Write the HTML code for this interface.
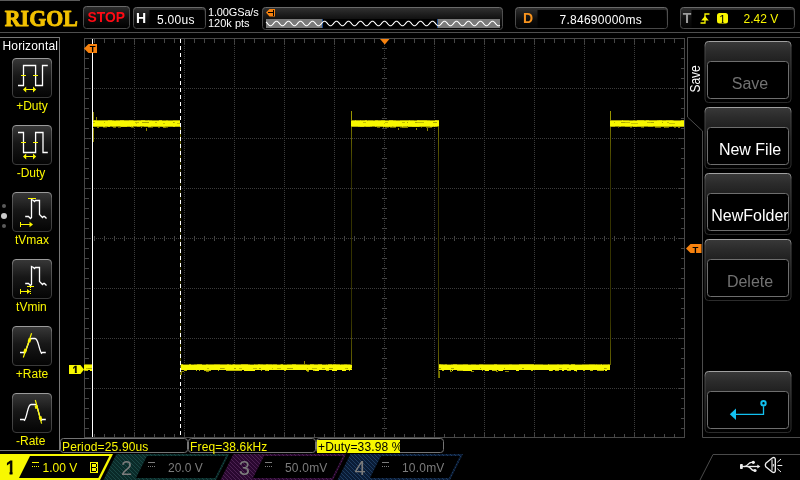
<!DOCTYPE html>
<html><head><meta charset="utf-8"><title>RIGOL Oscilloscope</title>
<style>
html,body{margin:0;padding:0;background:#000;}
body{width:800px;height:480px;overflow:hidden;}
svg{display:block;will-change:transform;font-family:"Liberation Sans",Arial,sans-serif;}
</style></head><body>
<svg width="800" height="480" viewBox="0 0 800 480" shape-rendering="crispEdges">
<defs>
<linearGradient id="gbtn" x1="0" y1="0" x2="0" y2="1"><stop offset="0" stop-color="#2c2c2c"/><stop offset=".6" stop-color="#0c0c0c"/><stop offset="1" stop-color="#000"/></linearGradient>
<linearGradient id="glab" x1="0" y1="0" x2="0" y2="1"><stop offset="0" stop-color="#323232"/><stop offset=".25" stop-color="#212121"/><stop offset=".6" stop-color="#0c0c0c"/><stop offset="1" stop-color="#030303"/></linearGradient>
<linearGradient id="gbord" x1="0" y1="0" x2="0" y2="1"><stop offset="0" stop-color="#6a6a6a"/><stop offset=".2" stop-color="#505050"/><stop offset="1" stop-color="#484848"/></linearGradient>
<linearGradient id="gedge" gradientUnits="userSpaceOnUse" x1="0" y1="112" x2="0" y2="378"><stop offset="0" stop-color="#8e8a00"/><stop offset=".06" stop-color="#747000"/><stop offset=".22" stop-color="#343200"/><stop offset=".78" stop-color="#343200"/><stop offset=".94" stop-color="#646000"/><stop offset="1" stop-color="#6c6800"/></linearGradient>
<linearGradient id="gkey" x1="0" y1="0" x2="0" y2="1"><stop offset="0" stop-color="#383838"/><stop offset=".45" stop-color="#171717"/><stop offset="1" stop-color="#040404"/></linearGradient>
<linearGradient id="gkeyb" x1="0" y1="0" x2="0" y2="1"><stop offset="0" stop-color="#9a9a9a"/><stop offset=".15" stop-color="#5a5a5a"/><stop offset="1" stop-color="#3a3a3a"/></linearGradient>
<linearGradient id="gkey2" x1="0" y1="0" x2="0" y2="1"><stop offset="0" stop-color="#393939"/><stop offset=".15" stop-color="#2c2c2c"/><stop offset=".33" stop-color="#202020"/><stop offset=".5" stop-color="#101010"/><stop offset="1" stop-color="#000"/></linearGradient>
<linearGradient id="gkeyb2" x1="0" y1="0" x2="0" y2="1"><stop offset="0" stop-color="#a0a0a0"/><stop offset=".1" stop-color="#4a4a4a"/><stop offset="1" stop-color="#2c2c2c"/></linearGradient>
<pattern id="tealh" width="4" height="4" patternUnits="userSpaceOnUse"><rect width="4" height="4" fill="#0a2b29"/><path d="M0 0h1v1h-1zM1 1h1v1h-1zM2 2h1v1h-1zM3 3h1v1h-1z" fill="#1a4644"/></pattern>
<pattern id="purph" width="4" height="4" patternUnits="userSpaceOnUse"><rect width="4" height="4" fill="#2a0830"/><path d="M0 0h1v1h-1zM1 1h1v1h-1zM2 2h1v1h-1zM3 3h1v1h-1z" fill="#4c2252"/></pattern>
<pattern id="blueh" width="4" height="4" patternUnits="userSpaceOnUse"><rect width="4" height="4" fill="#0a1c36"/><path d="M0 0h1v1h-1zM1 1h1v1h-1zM2 2h1v1h-1zM3 3h1v1h-1z" fill="#1e3c60"/></pattern>
</defs>
<rect width="800" height="480" fill="#000"/>
<rect x="0" y="0" width="80" height="1" fill="#5a5a5a" />
<rect x="0" y="32" width="800" height="1" fill="#4e4e4e" />
<text x="4.8" y="25.8" font-size="24" fill="#f2c100" font-weight="bold" font-family="Liberation Serif, Times New Roman, serif" textLength="73" lengthAdjust="spacingAndGlyphs" stroke="#f2c100" stroke-width="0.9" stroke-linejoin="round">RIGOL</text>
<rect x="83.5" y="6.5" width="46" height="22" rx="3" fill="url(#gbtn)" stroke="url(#gbord)" shape-rendering="geometricPrecision"/>
<text x="87.5" y="22" font-size="14" fill="#ff0a14" font-weight="bold" textLength="37.5" lengthAdjust="spacingAndGlyphs">STOP</text>
<rect x="133.5" y="7.5" width="72" height="21" rx="3" fill="url(#glab)" stroke="url(#gbord)" shape-rendering="geometricPrecision"/>
<path d="M149.500 10h53.500a1.500 1.500 0 0 1 1.500 1.500v15a1.500 1.500 0 0 1-1.500 1.500h-53.500z" fill="#000" shape-rendering="geometricPrecision"/>
<text x="136" y="23" font-size="14" fill="#fff" font-weight="bold" >H</text>
<text x="157" y="24" font-size="12" fill="#fff" letter-spacing="0.3">5.00us</text>
<text x="208" y="16" font-size="11" fill="#fff" letter-spacing="-0.15">1.00GSa/s</text>
<text x="208" y="26.5" font-size="11" fill="#fff" >120k pts</text>
<rect x="262.5" y="7.5" width="240" height="22" rx="3" fill="url(#glab)" stroke="url(#gbord)" shape-rendering="geometricPrecision"/>
<rect x="266" y="19" width="234" height="9" fill="#000" />
<rect x="266" y="19" width="56" height="9" fill="#7a7a7a" />
<rect x="438" y="19" width="62" height="9" fill="#7a7a7a" />
<rect x="322" y="19" width="1" height="9" fill="#1c4a8c" />
<rect x="437" y="19" width="1" height="9" fill="#1c4a8c" />
<polyline points="266.0,21.87 267.0,22.90 268.0,24.10 269.0,25.13 270.0,25.72 271.0,25.72 272.0,25.13 273.0,24.10 274.0,22.90 275.0,21.87 276.0,21.28 277.0,21.28 278.0,21.87 279.0,22.90 280.0,24.10 281.0,25.13 282.0,25.72 283.0,25.72 284.0,25.13 285.0,24.10 286.0,22.90 287.0,21.87 288.0,21.28 289.0,21.28 290.0,21.87 291.0,22.90 292.0,24.10 293.0,25.13 294.0,25.72 295.0,25.72 296.0,25.13 297.0,24.10 298.0,22.90 299.0,21.87 300.0,21.28 301.0,21.28 302.0,21.87 303.0,22.90 304.0,24.10 305.0,25.13 306.0,25.72 307.0,25.72 308.0,25.13 309.0,24.10 310.0,22.90 311.0,21.87 312.0,21.28 313.0,21.28 314.0,21.87 315.0,22.90 316.0,24.10 317.0,25.13 318.0,25.72 319.0,25.72 320.0,25.13 321.0,24.10 322.0,22.90 323.0,21.87 324.0,21.28 325.0,21.28 326.0,21.87 327.0,22.90 328.0,24.10 329.0,25.13 330.0,25.72 331.0,25.72 332.0,25.13 333.0,24.10 334.0,22.90 335.0,21.87 336.0,21.28 337.0,21.28 338.0,21.87 339.0,22.90 340.0,24.10 341.0,25.13 342.0,25.72 343.0,25.72 344.0,25.13 345.0,24.10 346.0,22.90 347.0,21.87 348.0,21.28 349.0,21.28 350.0,21.87 351.0,22.90 352.0,24.10 353.0,25.13 354.0,25.72 355.0,25.72 356.0,25.13 357.0,24.10 358.0,22.90 359.0,21.87 360.0,21.28 361.0,21.28 362.0,21.87 363.0,22.90 364.0,24.10 365.0,25.13 366.0,25.72 367.0,25.72 368.0,25.13 369.0,24.10 370.0,22.90 371.0,21.87 372.0,21.28 373.0,21.28 374.0,21.87 375.0,22.90 376.0,24.10 377.0,25.13 378.0,25.72 379.0,25.72 380.0,25.13 381.0,24.10 382.0,22.90 383.0,21.87 384.0,21.28 385.0,21.28 386.0,21.87 387.0,22.90 388.0,24.10 389.0,25.13 390.0,25.72 391.0,25.72 392.0,25.13 393.0,24.10 394.0,22.90 395.0,21.87 396.0,21.28 397.0,21.28 398.0,21.87 399.0,22.90 400.0,24.10 401.0,25.13 402.0,25.72 403.0,25.72 404.0,25.13 405.0,24.10 406.0,22.90 407.0,21.87 408.0,21.28 409.0,21.28 410.0,21.87 411.0,22.90 412.0,24.10 413.0,25.13 414.0,25.72 415.0,25.72 416.0,25.13 417.0,24.10 418.0,22.90 419.0,21.87 420.0,21.28 421.0,21.28 422.0,21.87 423.0,22.90 424.0,24.10 425.0,25.13 426.0,25.72 427.0,25.72 428.0,25.13 429.0,24.10 430.0,22.90 431.0,21.87 432.0,21.28 433.0,21.28 434.0,21.87 435.0,22.90 436.0,24.10 437.0,25.13 438.0,25.72 439.0,25.72 440.0,25.13 441.0,24.10 442.0,22.90 443.0,21.87 444.0,21.28 445.0,21.28 446.0,21.87 447.0,22.90 448.0,24.10 449.0,25.13 450.0,25.72 451.0,25.72 452.0,25.13 453.0,24.10 454.0,22.90 455.0,21.87 456.0,21.28 457.0,21.28 458.0,21.87 459.0,22.90 460.0,24.10 461.0,25.13 462.0,25.72 463.0,25.72 464.0,25.13 465.0,24.10 466.0,22.90 467.0,21.87 468.0,21.28 469.0,21.28 470.0,21.87 471.0,22.90 472.0,24.10 473.0,25.13 474.0,25.72 475.0,25.72 476.0,25.13 477.0,24.10 478.0,22.90 479.0,21.87 480.0,21.28 481.0,21.28 482.0,21.87 483.0,22.90 484.0,24.10 485.0,25.13 486.0,25.72 487.0,25.72 488.0,25.13 489.0,24.10 490.0,22.90 491.0,21.87 492.0,21.28 493.0,21.28 494.0,21.87 495.0,22.90 496.0,24.10 497.0,25.13 498.0,25.72 499.0,25.72 500.0,25.13" fill="none" stroke="#fff" stroke-width="1.1" shape-rendering="geometricPrecision"/>
<path d="M266 12.500l3.500-3.500h5.500v7.500h-5.500z" fill="#f7820e" shape-rendering="geometricPrecision"/>
<rect x="268" y="12" width="5" height="1" fill="#000" />
<rect x="273" y="10" width="1" height="6" fill="#000" />
<rect x="515.5" y="7.5" width="152" height="21" rx="3" fill="url(#glab)" stroke="url(#gbord)" shape-rendering="geometricPrecision"/>
<path d="M537.500 10h127.500a1.500 1.500 0 0 1 1.500 1.500v15a1.500 1.500 0 0 1-1.500 1.500h-127.500z" fill="#000" shape-rendering="geometricPrecision"/>
<text x="523" y="23" font-size="14" fill="#f7931e" font-weight="bold" >D</text>
<text x="559.5" y="24" font-size="12" fill="#fff" letter-spacing="0.26">7.84690000ms</text>
<rect x="680.5" y="7.5" width="114" height="21" rx="3" fill="url(#glab)" stroke="url(#gbord)" shape-rendering="geometricPrecision"/>
<path d="M691.500 10h100.500a1.500 1.500 0 0 1 1.500 1.500v15a1.500 1.500 0 0 1-1.500 1.500h-100.500z" fill="#000" shape-rendering="geometricPrecision"/>
<text x="682.7" y="23" font-size="14" fill="#9c9c9c" font-weight="bold" >T</text>
<path d="M700.500 23h4.500v-9h4.500" fill="none" stroke="#faf600" stroke-width="1.3" shape-rendering="geometricPrecision"/>
<path d="M705 16l-3.800 4.500h7.600z" fill="#faf600" shape-rendering="geometricPrecision"/>
<rect x="717" y="13" width="11" height="10.500" rx="2.500" fill="#faf600" shape-rendering="geometricPrecision"/>
<clipPath id="c2"><rect x="715" y="10" width="14" height="11.500"/><rect x="721.800" y="10" width="1.800" height="14"/></clipPath>
<text x="719.2" y="22.5" font-size="11.5" fill="#000" clip-path="url(#c2)">1</text>
<text x="743.5" y="23.2" font-size="12" fill="#faf600" >2.42 V</text>
<path d="M0 37.5h59.5v413h-59.5" fill="none" stroke="#777"/>
<text x="2.5" y="49.7" font-size="12" fill="#fff" letter-spacing="0.15">Horizontal</text>
<rect x="12.5" y="58.5" width="39" height="39" rx="3.500" fill="url(#gkey)" stroke="url(#gkeyb)" shape-rendering="geometricPrecision"/>
<text x="32" y="109.6" font-size="12" fill="#faf600" text-anchor="middle">+Duty</text>
<rect x="12.5" y="125.5" width="39" height="39" rx="3.500" fill="url(#gkey)" stroke="url(#gkeyb)" shape-rendering="geometricPrecision"/>
<text x="31" y="176.6" font-size="12" fill="#faf600" text-anchor="middle">-Duty</text>
<rect x="12.5" y="192.5" width="39" height="39" rx="3.500" fill="url(#gkey)" stroke="url(#gkeyb)" shape-rendering="geometricPrecision"/>
<text x="32" y="243.6" font-size="12" fill="#faf600" text-anchor="middle">tVmax</text>
<rect x="12.5" y="259.5" width="39" height="39" rx="3.500" fill="url(#gkey)" stroke="url(#gkeyb)" shape-rendering="geometricPrecision"/>
<text x="31.4" y="310.6" font-size="12" fill="#faf600" text-anchor="middle">tVmin</text>
<rect x="12.5" y="326.5" width="39" height="39" rx="3.500" fill="url(#gkey)" stroke="url(#gkeyb)" shape-rendering="geometricPrecision"/>
<text x="32" y="377.6" font-size="12" fill="#faf600" text-anchor="middle">+Rate</text>
<rect x="12.5" y="393.5" width="39" height="39" rx="3.500" fill="url(#gkey)" stroke="url(#gkeyb)" shape-rendering="geometricPrecision"/>
<text x="30.7" y="444.6" font-size="12" fill="#faf600" text-anchor="middle">-Rate</text>
<path d="M18 85.5H23.5V65.5H35.6V85.5H42.5V65.5H47.8" fill="none" stroke="#fff" stroke-width="1.3" stroke-linejoin="miter" shape-rendering="geometricPrecision"/>
<rect x="21" y="75" width="5" height="1" fill="#faf600" />
<rect x="33" y="75" width="5" height="1" fill="#faf600" />
<path d="M24 89.5h11" stroke="#faf600" stroke-width="1.2"/><path d="M23 89.5l3.200-3v6zM36.200 89.5l-3.200-3v6z" fill="#faf600" shape-rendering="geometricPrecision"/>
<path d="M18 132.5H23.5V152.5H35.6V132.5H43V152.5H47.8" fill="none" stroke="#fff" stroke-width="1.3" stroke-linejoin="miter" shape-rendering="geometricPrecision"/>
<rect x="21" y="142" width="5" height="1" fill="#faf600" />
<rect x="33" y="142" width="5" height="1" fill="#faf600" />
<path d="M24 156.5h11" stroke="#faf600" stroke-width="1.2"/><path d="M23 156.5l3.200-3v6zM36.200 156.5l-3.200-3v6z" fill="#faf600" shape-rendering="geometricPrecision"/>
<path d="M25.2 216.5H28.5L30.5 218.5L31.500 217.5V199.5L33.500 200.5L34.500 201.5L35.500 200.5H39.500V214.5L41.500 216.5L42.500 217.5L43.500 216.5H44.500L46.500 218.5" fill="none" stroke="#fff" stroke-width="1.3" stroke-linejoin="miter" shape-rendering="geometricPrecision"/>
<rect x="28" y="198" width="8" height="1" fill="#faf600" />
<path d="M20.5 222v5M20.5 224.5h10" stroke="#faf600" stroke-width="1.2" fill="none"/><path d="M33 224.5l-3.500-2.800v5.600z" fill="#faf600" shape-rendering="geometricPrecision"/>
<path d="M25.2 283.5H28.5L30.5 285.5L31.500 284.5V266.5L33.500 267.5L34.500 268.5L35.500 267.5H39.500V281.5L41.500 283.5L42.500 284.5L43.500 283.5H44.500L46.500 285.5" fill="none" stroke="#fff" stroke-width="1.3" stroke-linejoin="miter" shape-rendering="geometricPrecision"/>
<rect x="27" y="286" width="7" height="1" fill="#faf600" />
<path d="M20.5 289v5M20.5 291.5h8" stroke="#faf600" stroke-width="1.2" fill="none"/><path d="M30.300 291.5l-3.300-2.600v5.200z" fill="#faf600" shape-rendering="geometricPrecision"/>
<rect x="30" y="287" width="1" height="1" fill="#faf600" />
<rect x="30" y="289" width="1" height="1" fill="#faf600" />
<rect x="30" y="291" width="1" height="1" fill="#faf600" />
<rect x="30" y="293" width="1" height="1" fill="#faf600" />
<path d="M20 352.5H23.5L24.500 353.3L25.300 352L29.800 339.5Q30.300 338.5 32 338.5H35C38.500 338.5 38.500 349 41.500 353.3L42.500 352.5H45.800" fill="none" stroke="#fff" stroke-width="1.3" stroke-linejoin="miter" shape-rendering="geometricPrecision"/>
<path d="M23.300 357.5L31.600 333.3" stroke="#faf600" stroke-width="1.200" shape-rendering="geometricPrecision"/>
<path d="M24.600 352.5L25.800 349M28.900 342L30.100 338.5" stroke="#faf600" stroke-width="2.800" shape-rendering="geometricPrecision"/>
<path d="M20 419.5H23.5L24.500 420.3C27.500 416 27.500 404.5 31 404.5H35.500Q36.300 404.5 36.800 405.8L40.600 419.5L41.300 420.3L42.500 419.5H45.800" fill="none" stroke="#fff" stroke-width="1.3" stroke-linejoin="miter" shape-rendering="geometricPrecision"/>
<path d="M35.300 400L41.600 423.7" stroke="#faf600" stroke-width="1.200" shape-rendering="geometricPrecision"/>
<path d="M35.900 405.3L36.800 408.7M40 416.3L40.900 419.7" stroke="#faf600" stroke-width="2.800" shape-rendering="geometricPrecision"/>
<circle cx="4" cy="206" r="2" fill="#5a5a5a" shape-rendering="geometricPrecision"/>
<circle cx="4" cy="216" r="3" fill="#c8c8c8" shape-rendering="geometricPrecision"/>
<circle cx="4" cy="226" r="2" fill="#5a5a5a" shape-rendering="geometricPrecision"/>
<rect x="84.5" y="38.5" width="600" height="399" fill="none" stroke="#484848"/>
<path d="M94.5 39v4M94.5 437v-3M104.5 39v4M104.5 437v-3M114.5 39v4M114.5 437v-3M124.5 39v4M124.5 437v-3M134.5 39v6M134.5 437v-5M144.5 39v4M144.5 437v-3M154.5 39v4M154.5 437v-3M164.5 39v4M164.5 437v-3M174.5 39v4M174.5 437v-3M184.5 39v6M184.5 437v-5M194.5 39v4M194.5 437v-3M204.5 39v4M204.5 437v-3M214.5 39v4M214.5 437v-3M224.5 39v4M224.5 437v-3M234.5 39v6M234.5 437v-5M244.5 39v4M244.5 437v-3M254.5 39v4M254.5 437v-3M264.5 39v4M264.5 437v-3M274.5 39v4M274.5 437v-3M284.5 39v6M284.5 437v-5M294.5 39v4M294.5 437v-3M304.5 39v4M304.5 437v-3M314.5 39v4M314.5 437v-3M324.5 39v4M324.5 437v-3M334.5 39v6M334.5 437v-5M344.5 39v4M344.5 437v-3M354.5 39v4M354.5 437v-3M364.5 39v4M364.5 437v-3M374.5 39v4M374.5 437v-3M384.5 39v6M384.5 437v-5M394.5 39v4M394.5 437v-3M404.5 39v4M404.5 437v-3M414.5 39v4M414.5 437v-3M424.5 39v4M424.5 437v-3M434.5 39v6M434.5 437v-5M444.5 39v4M444.5 437v-3M454.5 39v4M454.5 437v-3M464.5 39v4M464.5 437v-3M474.5 39v4M474.5 437v-3M484.5 39v6M484.5 437v-5M494.5 39v4M494.5 437v-3M504.5 39v4M504.5 437v-3M514.5 39v4M514.5 437v-3M524.5 39v4M524.5 437v-3M534.5 39v6M534.5 437v-5M544.5 39v4M544.5 437v-3M554.5 39v4M554.5 437v-3M564.5 39v4M564.5 437v-3M574.5 39v4M574.5 437v-3M584.5 39v6M584.5 437v-5M594.5 39v4M594.5 437v-3M604.5 39v4M604.5 437v-3M614.5 39v4M614.5 437v-3M624.5 39v4M624.5 437v-3M634.5 39v6M634.5 437v-5M644.5 39v4M644.5 437v-3M654.5 39v4M654.5 437v-3M664.5 39v4M664.5 437v-3M674.5 39v4M674.5 437v-3M85 48.5h4M684 48.5h-3M85 58.5h4M684 58.5h-3M85 68.5h4M684 68.5h-3M85 78.5h4M684 78.5h-3M85 88.5h6M684 88.5h-5M85 98.5h4M684 98.5h-3M85 108.5h4M684 108.5h-3M85 118.5h4M684 118.5h-3M85 128.5h4M684 128.5h-3M85 138.5h6M684 138.5h-5M85 148.5h4M684 148.5h-3M85 158.5h4M684 158.5h-3M85 168.5h4M684 168.5h-3M85 178.5h4M684 178.5h-3M85 188.5h6M684 188.5h-5M85 198.5h4M684 198.5h-3M85 208.5h4M684 208.5h-3M85 218.5h4M684 218.5h-3M85 228.5h4M684 228.5h-3M85 238.5h6M684 238.5h-5M85 248.5h4M684 248.5h-3M85 258.5h4M684 258.5h-3M85 268.5h4M684 268.5h-3M85 278.5h4M684 278.5h-3M85 288.5h6M684 288.5h-5M85 298.5h4M684 298.5h-3M85 308.5h4M684 308.5h-3M85 318.5h4M684 318.5h-3M85 328.5h4M684 328.5h-3M85 338.5h6M684 338.5h-5M85 348.5h4M684 348.5h-3M85 358.5h4M684 358.5h-3M85 368.5h4M684 368.5h-3M85 378.5h4M684 378.5h-3M85 388.5h6M684 388.5h-5M85 398.5h4M684 398.5h-3M85 408.5h4M684 408.5h-3M85 418.5h4M684 418.5h-3M85 428.5h4M684 428.5h-3M94.5 236v5M104.5 236v5M114.5 236v5M124.5 236v5M134.5 236v5M144.5 236v5M154.5 236v5M164.5 236v5M174.5 236v5M184.5 236v5M194.5 236v5M204.5 236v5M214.5 236v5M224.5 236v5M234.5 236v5M244.5 236v5M254.5 236v5M264.5 236v5M274.5 236v5M284.5 236v5M294.5 236v5M304.5 236v5M314.5 236v5M324.5 236v5M334.5 236v5M344.5 236v5M354.5 236v5M364.5 236v5M374.5 236v5M384.5 236v5M394.5 236v5M404.5 236v5M414.5 236v5M424.5 236v5M434.5 236v5M444.5 236v5M454.5 236v5M464.5 236v5M474.5 236v5M484.5 236v5M494.5 236v5M504.5 236v5M514.5 236v5M524.5 236v5M534.5 236v5M544.5 236v5M554.5 236v5M564.5 236v5M574.5 236v5M584.5 236v5M594.5 236v5M604.5 236v5M614.5 236v5M624.5 236v5M634.5 236v5M644.5 236v5M654.5 236v5M664.5 236v5M674.5 236v5M382 48.5h5M382 58.5h5M382 68.5h5M382 78.5h5M382 88.5h5M382 98.5h5M382 108.5h5M382 118.5h5M382 128.5h5M382 138.5h5M382 148.5h5M382 158.5h5M382 168.5h5M382 178.5h5M382 188.5h5M382 198.5h5M382 208.5h5M382 218.5h5M382 228.5h5M382 238.5h5M382 248.5h5M382 258.5h5M382 268.5h5M382 278.5h5M382 288.5h5M382 298.5h5M382 308.5h5M382 318.5h5M382 328.5h5M382 338.5h5M382 348.5h5M382 358.5h5M382 368.5h5M382 378.5h5M382 388.5h5M382 398.5h5M382 408.5h5M382 418.5h5M382 428.5h5" stroke="#464646" fill="none"/>
<path d="M134.5 40V437M184.5 40V437M234.5 40V437M284.5 40V437M334.5 40V437M384.5 40V437M434.5 40V437M484.5 40V437M534.5 40V437M584.5 40V437M634.5 40V437" stroke="#3c3c3c" stroke-dasharray="1 1" fill="none"/>
<path d="M86 88.5H684M86 138.5H684M86 188.5H684M86 238.5H684M86 288.5H684M86 338.5H684M86 388.5H684" stroke="#3c3c3c" stroke-dasharray="1 1" fill="none"/>
<rect x="180" y="127" width="1" height="251" fill="url(#gedge)" />
<rect x="351" y="112" width="1" height="253" fill="url(#gedge)" />
<rect x="438" y="127" width="1" height="251" fill="url(#gedge)" />
<rect x="610" y="112" width="1" height="253" fill="url(#gedge)" />
<rect x="84" y="365" width="8" height="5" fill="#f8f800" />
<rect x="84" y="364" width="8" height="1" fill="#8e8a00" />
<rect x="86" y="368" width="2" height="1" fill="#c0bc00" />
<rect x="88" y="368" width="4" height="1" fill="#a8a400" />
<rect x="84" y="370" width="4" height="1" fill="#c0bc00" />
<rect x="90" y="370" width="2" height="1" fill="#f8f800" />
<rect x="93" y="121" width="87" height="5" fill="#f8f800" />
<rect x="93" y="120" width="87" height="1" fill="#a8a400" />
<rect x="93" y="120" width="2" height="1" fill="#c4c000" />
<rect x="95" y="120" width="2" height="1" fill="#c4c000" />
<rect x="108" y="120" width="4" height="1" fill="#d0cc00" />
<rect x="114" y="120" width="2" height="1" fill="#8a8600" />
<rect x="120" y="120" width="4" height="1" fill="#d0cc00" />
<rect x="129" y="120" width="4" height="1" fill="#c4c000" />
<rect x="134" y="120" width="3" height="1" fill="#8a8600" />
<rect x="141" y="120" width="4" height="1" fill="#d0cc00" />
<rect x="148" y="120" width="1" height="1" fill="#c4c000" />
<rect x="152" y="120" width="4" height="1" fill="#8a8600" />
<rect x="156" y="120" width="3" height="1" fill="#8a8600" />
<rect x="159" y="120" width="3" height="1" fill="#d0cc00" />
<rect x="162" y="120" width="4" height="1" fill="#8a8600" />
<rect x="168" y="120" width="4" height="1" fill="#8a8600" />
<rect x="172" y="120" width="1" height="1" fill="#8a8600" />
<rect x="93" y="126" width="87" height="1" fill="#b8b400" />
<rect x="103" y="126" width="2" height="1" fill="#e0dc00" />
<rect x="108" y="126" width="2" height="1" fill="#e0dc00" />
<rect x="110" y="126" width="2" height="1" fill="#8e8a00" />
<rect x="116" y="126" width="4" height="1" fill="#8e8a00" />
<rect x="121" y="126" width="4" height="1" fill="#e0dc00" />
<rect x="125" y="126" width="2" height="1" fill="#e0dc00" />
<rect x="130" y="126" width="1" height="1" fill="#e0dc00" />
<rect x="132" y="126" width="1" height="1" fill="#e0dc00" />
<rect x="133" y="126" width="4" height="1" fill="#8e8a00" />
<rect x="140" y="126" width="4" height="1" fill="#8e8a00" />
<rect x="148" y="126" width="3" height="1" fill="#e0dc00" />
<rect x="162" y="126" width="3" height="1" fill="#d0cc00" />
<rect x="173" y="126" width="2" height="1" fill="#e0dc00" />
<rect x="97" y="127" width="2" height="1" fill="#8a8400" />
<rect x="103" y="127" width="4" height="1" fill="#5a5800" />
<rect x="113" y="127" width="3" height="1" fill="#6e6a00" />
<rect x="118" y="127" width="3" height="1" fill="#5a5800" />
<rect x="131" y="127" width="3" height="1" fill="#5a5800" />
<rect x="141" y="127" width="1" height="1" fill="#8a8400" />
<rect x="148" y="127" width="3" height="1" fill="#5a5800" />
<rect x="151" y="127" width="2" height="1" fill="#5a5800" />
<rect x="158" y="127" width="2" height="1" fill="#6e6a00" />
<rect x="163" y="127" width="3" height="1" fill="#8a8400" />
<rect x="166" y="127" width="2" height="1" fill="#5a5800" />
<rect x="93" y="122" width="2" height="1" fill="#c0bc00" />
<rect x="104" y="122" width="1" height="1" fill="#c0bc00" />
<rect x="135" y="122" width="4" height="1" fill="#c0bc00" />
<rect x="142" y="122" width="3" height="1" fill="#a8a400" />
<rect x="145" y="122" width="4" height="1" fill="#a8a400" />
<rect x="155" y="122" width="2" height="1" fill="#c0bc00" />
<rect x="173" y="122" width="1" height="1" fill="#a8a400" />
<rect x="174" y="122" width="1" height="1" fill="#c0bc00" />
<rect x="136" y="123" width="1" height="1" fill="#c8c400" />
<rect x="163" y="123" width="2" height="1" fill="#c8c400" />
<rect x="177" y="123" width="3" height="1" fill="#c8c400" />
<rect x="181" y="365" width="171" height="5" fill="#f8f800" />
<rect x="181" y="364" width="171" height="1" fill="#8e8a00" />
<rect x="181" y="364" width="2" height="1" fill="#c0bc00" />
<rect x="183" y="364" width="3" height="1" fill="#6a6600" />
<rect x="186" y="364" width="3" height="1" fill="#6a6600" />
<rect x="189" y="364" width="2" height="1" fill="#c0bc00" />
<rect x="191" y="364" width="3" height="1" fill="#6a6600" />
<rect x="197" y="364" width="2" height="1" fill="#c0bc00" />
<rect x="199" y="364" width="1" height="1" fill="#c0bc00" />
<rect x="200" y="364" width="2" height="1" fill="#c0bc00" />
<rect x="202" y="364" width="4" height="1" fill="#6a6600" />
<rect x="206" y="364" width="2" height="1" fill="#a8a400" />
<rect x="214" y="364" width="4" height="1" fill="#a8a400" />
<rect x="218" y="364" width="2" height="1" fill="#a8a400" />
<rect x="227" y="364" width="2" height="1" fill="#c0bc00" />
<rect x="231" y="364" width="1" height="1" fill="#6a6600" />
<rect x="233" y="364" width="2" height="1" fill="#c0bc00" />
<rect x="241" y="364" width="4" height="1" fill="#c0bc00" />
<rect x="245" y="364" width="3" height="1" fill="#c0bc00" />
<rect x="250" y="364" width="4" height="1" fill="#6a6600" />
<rect x="254" y="364" width="1" height="1" fill="#a8a400" />
<rect x="258" y="364" width="2" height="1" fill="#c0bc00" />
<rect x="260" y="364" width="3" height="1" fill="#a8a400" />
<rect x="266" y="364" width="2" height="1" fill="#c0bc00" />
<rect x="268" y="364" width="4" height="1" fill="#a8a400" />
<rect x="273" y="364" width="4" height="1" fill="#a8a400" />
<rect x="277" y="364" width="3" height="1" fill="#6a6600" />
<rect x="281" y="364" width="2" height="1" fill="#c0bc00" />
<rect x="283" y="364" width="4" height="1" fill="#6a6600" />
<rect x="292" y="364" width="4" height="1" fill="#c0bc00" />
<rect x="307" y="364" width="3" height="1" fill="#6a6600" />
<rect x="310" y="364" width="4" height="1" fill="#c0bc00" />
<rect x="318" y="364" width="4" height="1" fill="#c0bc00" />
<rect x="322" y="364" width="4" height="1" fill="#6a6600" />
<rect x="327" y="364" width="1" height="1" fill="#6a6600" />
<rect x="328" y="364" width="4" height="1" fill="#c0bc00" />
<rect x="333" y="364" width="3" height="1" fill="#c0bc00" />
<rect x="336" y="364" width="4" height="1" fill="#a8a400" />
<rect x="340" y="364" width="1" height="1" fill="#6a6600" />
<rect x="344" y="364" width="3" height="1" fill="#a8a400" />
<rect x="350" y="364" width="2" height="1" fill="#6a6600" />
<rect x="207" y="368" width="2" height="1" fill="#c0bc00" />
<rect x="220" y="368" width="4" height="1" fill="#a8a400" />
<rect x="224" y="368" width="1" height="1" fill="#c0bc00" />
<rect x="234" y="368" width="2" height="1" fill="#a8a400" />
<rect x="239" y="368" width="3" height="1" fill="#c0bc00" />
<rect x="253" y="368" width="4" height="1" fill="#c0bc00" />
<rect x="259" y="368" width="2" height="1" fill="#a8a400" />
<rect x="272" y="368" width="1" height="1" fill="#c0bc00" />
<rect x="277" y="368" width="4" height="1" fill="#c0bc00" />
<rect x="287" y="368" width="2" height="1" fill="#a8a400" />
<rect x="289" y="368" width="4" height="1" fill="#a8a400" />
<rect x="307" y="368" width="1" height="1" fill="#c0bc00" />
<rect x="312" y="368" width="1" height="1" fill="#c0bc00" />
<rect x="313" y="368" width="4" height="1" fill="#c0bc00" />
<rect x="322" y="368" width="3" height="1" fill="#a8a400" />
<rect x="329" y="368" width="4" height="1" fill="#a8a400" />
<rect x="345" y="368" width="2" height="1" fill="#c0bc00" />
<rect x="347" y="368" width="1" height="1" fill="#a8a400" />
<rect x="351" y="368" width="1" height="1" fill="#a8a400" />
<rect x="184" y="370" width="3" height="1" fill="#c0bc00" />
<rect x="196" y="370" width="1" height="1" fill="#c0bc00" />
<rect x="199" y="370" width="1" height="1" fill="#c0bc00" />
<rect x="204" y="370" width="3" height="1" fill="#c0bc00" />
<rect x="207" y="370" width="4" height="1" fill="#c0bc00" />
<rect x="218" y="370" width="1" height="1" fill="#c0bc00" />
<rect x="226" y="370" width="4" height="1" fill="#c0bc00" />
<rect x="230" y="370" width="4" height="1" fill="#c0bc00" />
<rect x="234" y="370" width="4" height="1" fill="#c0bc00" />
<rect x="238" y="370" width="4" height="1" fill="#c0bc00" />
<rect x="244" y="370" width="4" height="1" fill="#f8f800" />
<rect x="248" y="370" width="4" height="1" fill="#f8f800" />
<rect x="252" y="370" width="3" height="1" fill="#f8f800" />
<rect x="261" y="370" width="1" height="1" fill="#c0bc00" />
<rect x="265" y="370" width="3" height="1" fill="#c0bc00" />
<rect x="268" y="370" width="1" height="1" fill="#f8f800" />
<rect x="284" y="370" width="2" height="1" fill="#c0bc00" />
<rect x="306" y="370" width="3" height="1" fill="#c0bc00" />
<rect x="313" y="370" width="2" height="1" fill="#c0bc00" />
<rect x="315" y="370" width="4" height="1" fill="#f8f800" />
<rect x="326" y="370" width="3" height="1" fill="#c0bc00" />
<rect x="332" y="370" width="3" height="1" fill="#f8f800" />
<rect x="335" y="370" width="2" height="1" fill="#f8f800" />
<rect x="342" y="370" width="4" height="1" fill="#f8f800" />
<rect x="349" y="370" width="1" height="1" fill="#c0bc00" />
<rect x="181" y="371" width="3" height="1" fill="#8a8400" />
<rect x="206" y="371" width="3" height="1" fill="#8a8400" />
<rect x="307" y="371" width="2" height="1" fill="#8a8400" />
<rect x="351" y="121" width="88" height="5" fill="#f8f800" />
<rect x="351" y="120" width="88" height="1" fill="#a8a400" />
<rect x="355" y="120" width="1" height="1" fill="#d0cc00" />
<rect x="360" y="120" width="1" height="1" fill="#c4c000" />
<rect x="365" y="120" width="2" height="1" fill="#d0cc00" />
<rect x="367" y="120" width="1" height="1" fill="#8a8600" />
<rect x="373" y="120" width="2" height="1" fill="#8a8600" />
<rect x="375" y="120" width="3" height="1" fill="#c4c000" />
<rect x="381" y="120" width="4" height="1" fill="#c4c000" />
<rect x="385" y="120" width="4" height="1" fill="#8a8600" />
<rect x="389" y="120" width="2" height="1" fill="#d0cc00" />
<rect x="391" y="120" width="2" height="1" fill="#d0cc00" />
<rect x="396" y="120" width="4" height="1" fill="#8a8600" />
<rect x="409" y="120" width="1" height="1" fill="#c4c000" />
<rect x="414" y="120" width="3" height="1" fill="#8a8600" />
<rect x="417" y="120" width="2" height="1" fill="#d0cc00" />
<rect x="419" y="120" width="4" height="1" fill="#c4c000" />
<rect x="423" y="120" width="1" height="1" fill="#c4c000" />
<rect x="424" y="120" width="3" height="1" fill="#c4c000" />
<rect x="430" y="120" width="1" height="1" fill="#8a8600" />
<rect x="431" y="120" width="4" height="1" fill="#8a8600" />
<rect x="435" y="120" width="1" height="1" fill="#d0cc00" />
<rect x="436" y="120" width="1" height="1" fill="#d0cc00" />
<rect x="437" y="120" width="2" height="1" fill="#c4c000" />
<rect x="351" y="126" width="88" height="1" fill="#b8b400" />
<rect x="358" y="126" width="2" height="1" fill="#d0cc00" />
<rect x="360" y="126" width="4" height="1" fill="#e0dc00" />
<rect x="366" y="126" width="4" height="1" fill="#d0cc00" />
<rect x="372" y="126" width="3" height="1" fill="#8e8a00" />
<rect x="375" y="126" width="1" height="1" fill="#d0cc00" />
<rect x="383" y="126" width="4" height="1" fill="#e0dc00" />
<rect x="387" y="126" width="1" height="1" fill="#e0dc00" />
<rect x="388" y="126" width="4" height="1" fill="#e0dc00" />
<rect x="393" y="126" width="1" height="1" fill="#d0cc00" />
<rect x="394" y="126" width="2" height="1" fill="#e0dc00" />
<rect x="402" y="126" width="1" height="1" fill="#e0dc00" />
<rect x="407" y="126" width="1" height="1" fill="#8e8a00" />
<rect x="408" y="126" width="4" height="1" fill="#d0cc00" />
<rect x="412" y="126" width="4" height="1" fill="#e0dc00" />
<rect x="416" y="126" width="3" height="1" fill="#e0dc00" />
<rect x="419" y="126" width="1" height="1" fill="#d0cc00" />
<rect x="430" y="126" width="3" height="1" fill="#e0dc00" />
<rect x="434" y="126" width="1" height="1" fill="#e0dc00" />
<rect x="437" y="126" width="2" height="1" fill="#8e8a00" />
<rect x="377" y="127" width="2" height="1" fill="#6e6a00" />
<rect x="379" y="127" width="1" height="1" fill="#6e6a00" />
<rect x="383" y="127" width="1" height="1" fill="#6e6a00" />
<rect x="385" y="127" width="1" height="1" fill="#5a5800" />
<rect x="386" y="127" width="3" height="1" fill="#5a5800" />
<rect x="390" y="127" width="4" height="1" fill="#6e6a00" />
<rect x="394" y="127" width="2" height="1" fill="#6e6a00" />
<rect x="400" y="127" width="2" height="1" fill="#5a5800" />
<rect x="402" y="127" width="2" height="1" fill="#8a8400" />
<rect x="404" y="127" width="4" height="1" fill="#8a8400" />
<rect x="421" y="127" width="1" height="1" fill="#5a5800" />
<rect x="426" y="127" width="3" height="1" fill="#6e6a00" />
<rect x="429" y="127" width="2" height="1" fill="#6e6a00" />
<rect x="431" y="127" width="1" height="1" fill="#6e6a00" />
<rect x="363" y="122" width="3" height="1" fill="#c0bc00" />
<rect x="385" y="122" width="3" height="1" fill="#c0bc00" />
<rect x="402" y="122" width="3" height="1" fill="#c0bc00" />
<rect x="407" y="122" width="1" height="1" fill="#a8a400" />
<rect x="415" y="122" width="2" height="1" fill="#a8a400" />
<rect x="417" y="122" width="3" height="1" fill="#c0bc00" />
<rect x="420" y="122" width="4" height="1" fill="#c0bc00" />
<rect x="433" y="122" width="4" height="1" fill="#a8a400" />
<rect x="384" y="123" width="1" height="1" fill="#c8c400" />
<rect x="439" y="365" width="171" height="5" fill="#f8f800" />
<rect x="439" y="364" width="171" height="1" fill="#8e8a00" />
<rect x="439" y="364" width="2" height="1" fill="#c0bc00" />
<rect x="441" y="364" width="2" height="1" fill="#a8a400" />
<rect x="445" y="364" width="2" height="1" fill="#a8a400" />
<rect x="447" y="364" width="4" height="1" fill="#6a6600" />
<rect x="453" y="364" width="4" height="1" fill="#c0bc00" />
<rect x="463" y="364" width="2" height="1" fill="#a8a400" />
<rect x="465" y="364" width="3" height="1" fill="#a8a400" />
<rect x="468" y="364" width="3" height="1" fill="#6a6600" />
<rect x="476" y="364" width="3" height="1" fill="#6a6600" />
<rect x="479" y="364" width="4" height="1" fill="#a8a400" />
<rect x="494" y="364" width="3" height="1" fill="#c0bc00" />
<rect x="509" y="364" width="3" height="1" fill="#a8a400" />
<rect x="519" y="364" width="3" height="1" fill="#c0bc00" />
<rect x="522" y="364" width="4" height="1" fill="#c0bc00" />
<rect x="526" y="364" width="4" height="1" fill="#c0bc00" />
<rect x="530" y="364" width="4" height="1" fill="#c0bc00" />
<rect x="534" y="364" width="1" height="1" fill="#6a6600" />
<rect x="543" y="364" width="4" height="1" fill="#6a6600" />
<rect x="547" y="364" width="1" height="1" fill="#6a6600" />
<rect x="548" y="364" width="1" height="1" fill="#c0bc00" />
<rect x="557" y="364" width="2" height="1" fill="#a8a400" />
<rect x="563" y="364" width="3" height="1" fill="#a8a400" />
<rect x="566" y="364" width="3" height="1" fill="#a8a400" />
<rect x="569" y="364" width="2" height="1" fill="#6a6600" />
<rect x="571" y="364" width="4" height="1" fill="#c0bc00" />
<rect x="575" y="364" width="3" height="1" fill="#6a6600" />
<rect x="578" y="364" width="4" height="1" fill="#6a6600" />
<rect x="589" y="364" width="3" height="1" fill="#a8a400" />
<rect x="592" y="364" width="3" height="1" fill="#a8a400" />
<rect x="596" y="364" width="1" height="1" fill="#a8a400" />
<rect x="601" y="364" width="1" height="1" fill="#c0bc00" />
<rect x="602" y="364" width="1" height="1" fill="#6a6600" />
<rect x="608" y="364" width="1" height="1" fill="#a8a400" />
<rect x="439" y="368" width="2" height="1" fill="#a8a400" />
<rect x="451" y="368" width="3" height="1" fill="#a8a400" />
<rect x="480" y="368" width="1" height="1" fill="#a8a400" />
<rect x="504" y="368" width="1" height="1" fill="#a8a400" />
<rect x="522" y="368" width="2" height="1" fill="#a8a400" />
<rect x="559" y="368" width="3" height="1" fill="#c0bc00" />
<rect x="567" y="368" width="2" height="1" fill="#c0bc00" />
<rect x="604" y="368" width="2" height="1" fill="#a8a400" />
<rect x="606" y="368" width="1" height="1" fill="#c0bc00" />
<rect x="442" y="370" width="2" height="1" fill="#c0bc00" />
<rect x="450" y="370" width="1" height="1" fill="#c0bc00" />
<rect x="452" y="370" width="1" height="1" fill="#f8f800" />
<rect x="457" y="370" width="2" height="1" fill="#c0bc00" />
<rect x="459" y="370" width="4" height="1" fill="#c0bc00" />
<rect x="463" y="370" width="2" height="1" fill="#f8f800" />
<rect x="465" y="370" width="3" height="1" fill="#f8f800" />
<rect x="468" y="370" width="4" height="1" fill="#f8f800" />
<rect x="482" y="370" width="1" height="1" fill="#c0bc00" />
<rect x="485" y="370" width="4" height="1" fill="#f8f800" />
<rect x="492" y="370" width="2" height="1" fill="#c0bc00" />
<rect x="494" y="370" width="3" height="1" fill="#c0bc00" />
<rect x="498" y="370" width="1" height="1" fill="#c0bc00" />
<rect x="499" y="370" width="4" height="1" fill="#f8f800" />
<rect x="516" y="370" width="3" height="1" fill="#f8f800" />
<rect x="531" y="370" width="2" height="1" fill="#c0bc00" />
<rect x="549" y="370" width="3" height="1" fill="#f8f800" />
<rect x="552" y="370" width="1" height="1" fill="#c0bc00" />
<rect x="555" y="370" width="2" height="1" fill="#c0bc00" />
<rect x="557" y="370" width="2" height="1" fill="#c0bc00" />
<rect x="562" y="370" width="2" height="1" fill="#f8f800" />
<rect x="567" y="370" width="4" height="1" fill="#c0bc00" />
<rect x="574" y="370" width="3" height="1" fill="#f8f800" />
<rect x="583" y="370" width="2" height="1" fill="#c0bc00" />
<rect x="590" y="370" width="3" height="1" fill="#c0bc00" />
<rect x="597" y="370" width="4" height="1" fill="#c0bc00" />
<rect x="601" y="370" width="3" height="1" fill="#c0bc00" />
<rect x="605" y="370" width="2" height="1" fill="#f8f800" />
<rect x="450" y="371" width="2" height="1" fill="#8a8400" />
<rect x="471" y="371" width="3" height="1" fill="#8a8400" />
<rect x="496" y="371" width="2" height="1" fill="#8a8400" />
<rect x="505" y="371" width="1" height="1" fill="#8a8400" />
<rect x="506" y="371" width="3" height="1" fill="#8a8400" />
<rect x="576" y="371" width="1" height="1" fill="#8a8400" />
<rect x="610" y="121" width="74" height="5" fill="#f8f800" />
<rect x="610" y="120" width="74" height="1" fill="#a8a400" />
<rect x="622" y="120" width="1" height="1" fill="#d0cc00" />
<rect x="629" y="120" width="4" height="1" fill="#8a8600" />
<rect x="635" y="120" width="2" height="1" fill="#8a8600" />
<rect x="637" y="120" width="4" height="1" fill="#d0cc00" />
<rect x="641" y="120" width="3" height="1" fill="#d0cc00" />
<rect x="646" y="120" width="3" height="1" fill="#d0cc00" />
<rect x="657" y="120" width="2" height="1" fill="#c4c000" />
<rect x="659" y="120" width="3" height="1" fill="#d0cc00" />
<rect x="666" y="120" width="4" height="1" fill="#c4c000" />
<rect x="670" y="120" width="2" height="1" fill="#d0cc00" />
<rect x="672" y="120" width="1" height="1" fill="#c4c000" />
<rect x="674" y="120" width="2" height="1" fill="#8a8600" />
<rect x="676" y="120" width="1" height="1" fill="#8a8600" />
<rect x="677" y="120" width="4" height="1" fill="#8a8600" />
<rect x="681" y="120" width="3" height="1" fill="#c4c000" />
<rect x="610" y="126" width="74" height="1" fill="#b8b400" />
<rect x="615" y="126" width="4" height="1" fill="#8e8a00" />
<rect x="621" y="126" width="2" height="1" fill="#8e8a00" />
<rect x="623" y="126" width="2" height="1" fill="#8e8a00" />
<rect x="632" y="126" width="1" height="1" fill="#8e8a00" />
<rect x="633" y="126" width="4" height="1" fill="#d0cc00" />
<rect x="644" y="126" width="4" height="1" fill="#8e8a00" />
<rect x="653" y="126" width="2" height="1" fill="#8e8a00" />
<rect x="672" y="126" width="1" height="1" fill="#8e8a00" />
<rect x="618" y="127" width="1" height="1" fill="#5a5800" />
<rect x="630" y="127" width="2" height="1" fill="#5a5800" />
<rect x="641" y="127" width="2" height="1" fill="#5a5800" />
<rect x="643" y="127" width="1" height="1" fill="#6e6a00" />
<rect x="655" y="127" width="3" height="1" fill="#6e6a00" />
<rect x="658" y="127" width="3" height="1" fill="#6e6a00" />
<rect x="664" y="127" width="1" height="1" fill="#8a8400" />
<rect x="665" y="127" width="4" height="1" fill="#6e6a00" />
<rect x="674" y="127" width="2" height="1" fill="#6e6a00" />
<rect x="678" y="127" width="2" height="1" fill="#8a8400" />
<rect x="614" y="122" width="1" height="1" fill="#c0bc00" />
<rect x="621" y="122" width="4" height="1" fill="#a8a400" />
<rect x="625" y="122" width="1" height="1" fill="#c0bc00" />
<rect x="626" y="122" width="4" height="1" fill="#c0bc00" />
<rect x="647" y="122" width="4" height="1" fill="#c0bc00" />
<rect x="651" y="122" width="3" height="1" fill="#a8a400" />
<rect x="662" y="122" width="1" height="1" fill="#a8a400" />
<rect x="667" y="122" width="2" height="1" fill="#c0bc00" />
<rect x="631" y="123" width="4" height="1" fill="#c8c400" />
<rect x="635" y="123" width="3" height="1" fill="#c8c400" />
<rect x="669" y="123" width="2" height="1" fill="#c8c400" />
<rect x="671" y="123" width="4" height="1" fill="#c8c400" />
<rect x="93" y="112" width="1" height="8" fill="#8a8400" />
<rect x="93" y="128" width="1" height="14" fill="#8a8400" />
<rect x="96" y="117" width="1" height="3" fill="#8a8400" />
<rect x="351" y="111" width="1" height="9" fill="#989400" />
<rect x="610" y="111" width="1" height="9" fill="#989400" />
<rect x="439" y="371" width="1" height="7" fill="#807c00" />
<rect x="181" y="371" width="1" height="4" fill="#807c00" />
<rect x="146" y="128" width="1" height="3" fill="#8a8400" />
<rect x="398" y="128" width="1" height="2" fill="#8a8400" />
<rect x="416" y="128" width="1" height="2" fill="#8a8400" />
<rect x="427" y="128" width="1" height="3" fill="#8a8400" />
<rect x="304" y="361" width="1" height="3" fill="#8a8400" />
<rect x="92" y="39" width="1" height="398" fill="#fff" />
<path d="M180.5 39V437" stroke="#fff" stroke-dasharray="4 3" stroke-width="1.400"/>
<path d="M84 48.5l4.500-4.500h8.500v9h-8.500z" fill="#f7820e" shape-rendering="geometricPrecision"/>
<text x="89.7" y="52" font-size="9.5" fill="#000" font-weight="bold" >T</text>
<path d="M380 39h9.500l-4.750 5.500z" fill="#f7820e" shape-rendering="geometricPrecision"/>
<path d="M686 248.5l4.500-4.500h11v9h-11z" fill="#f7820e" shape-rendering="geometricPrecision"/>
<text x="692.6" y="252.6" font-size="9.5" fill="#000" font-weight="bold" >T</text>
<path d="M69 365h11.500l3.500 4.500l-3.500 4.500h-11.500z" fill="#f8f800" shape-rendering="geometricPrecision"/>
<clipPath id="c3"><rect x="68" y="360" width="14" height="11.700"/><rect x="74.700" y="360" width="2.300" height="13"/></clipPath>
<text x="72.7" y="373.9" font-size="10" font-weight="bold" fill="#000" stroke="#000" stroke-width=".400" clip-path="url(#c3)">1</text>
<path d="M800 37.5H687.5V117L702.500 131V437.500H800" fill="none" stroke="#4c4c4c" shape-rendering="geometricPrecision"/>
<text transform="translate(700.4,92.600) rotate(-90) scale(0.83,1)" font-size="14.500" fill="#fff">Save</text>
<rect x="705" y="41.5" width="86" height="61" rx="3.500" fill="url(#gkey2)" stroke="url(#gkeyb2)" shape-rendering="geometricPrecision"/>
<rect x="707.5" y="61.5" width="81" height="37" rx="3" fill="#000" stroke="#6e6e6e" shape-rendering="geometricPrecision"/>
<svg x="708" y="62" width="80" height="36" viewBox="708 62 80 36"><text x="750" y="89" font-size="16" fill="#727272" text-anchor="middle">Save</text></svg>
<rect x="705" y="107.5" width="86" height="61" rx="3.500" fill="url(#gkey2)" stroke="url(#gkeyb2)" shape-rendering="geometricPrecision"/>
<rect x="707.5" y="127.5" width="81" height="37" rx="3" fill="#000" stroke="#6e6e6e" shape-rendering="geometricPrecision"/>
<svg x="708" y="128" width="80" height="36" viewBox="708 128 80 36"><text x="750" y="155" font-size="16" fill="#fff" text-anchor="middle">New File</text></svg>
<rect x="705" y="173.5" width="86" height="61" rx="3.500" fill="url(#gkey2)" stroke="url(#gkeyb2)" shape-rendering="geometricPrecision"/>
<rect x="707.5" y="193.5" width="81" height="37" rx="3" fill="#000" stroke="#6e6e6e" shape-rendering="geometricPrecision"/>
<svg x="708" y="194" width="80" height="36" viewBox="708 194 80 36"><text x="750" y="221" font-size="16" fill="#fff" text-anchor="middle">NewFolder</text></svg>
<rect x="705" y="239.5" width="86" height="61" rx="3.500" fill="url(#gkey2)" stroke="url(#gkeyb2)" shape-rendering="geometricPrecision"/>
<rect x="707.5" y="259.5" width="81" height="37" rx="3" fill="#000" stroke="#6e6e6e" shape-rendering="geometricPrecision"/>
<svg x="708" y="260" width="80" height="36" viewBox="708 260 80 36"><text x="750" y="287" font-size="16" fill="#727272" text-anchor="middle">Delete</text></svg>
<rect x="705" y="371.5" width="86" height="61" rx="3.500" fill="url(#gkey2)" stroke="url(#gkeyb2)" shape-rendering="geometricPrecision"/>
<rect x="707.5" y="391.5" width="81" height="37" rx="3" fill="#000" stroke="#6e6e6e" shape-rendering="geometricPrecision"/>
<path d="M735.500 414.300H763.500V406.300" fill="none" stroke="#12c0f0" stroke-width="1.300" shape-rendering="geometricPrecision"/>
<path d="M729.800 414.300l6.200-5.700v11.400z" fill="#12c0f0" shape-rendering="geometricPrecision"/>
<circle cx="763.5" cy="403.300" r="2.200" fill="none" stroke="#12c0f0" stroke-width="2" shape-rendering="geometricPrecision"/>
<rect x="60.500" y="438.5" width="127" height="14" rx="3" fill="#000" stroke="#747474" shape-rendering="geometricPrecision"/>
<rect x="188.500" y="438.5" width="127" height="14" rx="3" fill="#000" stroke="#747474" shape-rendering="geometricPrecision"/>
<rect x="316.500" y="438.5" width="127" height="14" rx="3" fill="#000" stroke="#747474" shape-rendering="geometricPrecision"/>
<rect x="317" y="440" width="83" height="13" fill="#f8f800" />
<text x="62" y="451" font-size="12" fill="#faf600" letter-spacing="0.15">Period=25.90us</text>
<text x="190" y="451" font-size="12" fill="#faf600" letter-spacing="0.15">Freq=38.6kHz</text>
<text x="318" y="451" font-size="12" fill="#000" letter-spacing="0.15">+Duty=33.98 %</text>
<path d="M0 454H113L100 480H0z" fill="#f8f800" shape-rendering="geometricPrecision"/>
<path d="M30 456H109.400L98.400 478H19z" fill="#000" shape-rendering="geometricPrecision"/>
<clipPath id="c1"><rect x="0" y="455" width="30" height="17"/><rect x="9.600" y="455" width="2.900" height="25"/></clipPath>
<text x="5.4" y="474.2" font-size="19" fill="#000" stroke="#000" stroke-width="0.800" clip-path="url(#c1)">1</text>
<text x="42.5" y="471.5" font-size="12" fill="#faf600" >1.00 V</text>
<rect x="32" y="462" width="7" height="1" fill="#faf600" />
<rect x="32" y="466" width="1" height="1" fill="#faf600" />
<rect x="34" y="466" width="1" height="1" fill="#faf600" />
<rect x="36" y="466" width="1" height="1" fill="#faf600" />
<rect x="38" y="466" width="1" height="1" fill="#faf600" />
<rect x="90" y="462" width="8" height="11" fill="#faf600" />
<rect x="91" y="463" width="5" height="1" fill="#000" />
<rect x="91" y="467" width="5" height="1" fill="#000" />
<rect x="91" y="471" width="5" height="1" fill="#000" />
<rect x="91" y="463" width="1" height="9" fill="#000" />
<rect x="96" y="464" width="1" height="3" fill="#000" />
<rect x="96" y="468" width="1" height="3" fill="#000" />
<path d="M116.5 454H229.0L216.0 480H103.5z" fill="url(#tealh)" shape-rendering="geometricPrecision"/>
<path d="M147.0 456H226.0L215.0 478H136.0z" fill="#000" shape-rendering="geometricPrecision"/>
<text x="121.1" y="474.8" font-size="20" fill="#7c7c7c" >2</text>
<text x="168.0" y="471.5" font-size="12" fill="#7c7c7c">20.0 V</text>
<rect x="148" y="462" width="7" height="1" fill="#7c7c7c" />
<rect x="148" y="466" width="1" height="1" fill="#7c7c7c" />
<rect x="150" y="466" width="1" height="1" fill="#7c7c7c" />
<rect x="152" y="466" width="1" height="1" fill="#7c7c7c" />
<rect x="154" y="466" width="1" height="1" fill="#7c7c7c" />
<path d="M233.5 454H346.0L333.0 480H220.5z" fill="url(#purph)" shape-rendering="geometricPrecision"/>
<path d="M264.0 456H343.0L332.0 478H253.0z" fill="#000" shape-rendering="geometricPrecision"/>
<text x="238.8" y="474.8" font-size="20" fill="#7c7c7c" >3</text>
<text x="285.0" y="471.5" font-size="12" fill="#7c7c7c" letter-spacing="0.2">50.0mV</text>
<rect x="265" y="462" width="7" height="1" fill="#7c7c7c" />
<rect x="265" y="466" width="1" height="1" fill="#7c7c7c" />
<rect x="267" y="466" width="1" height="1" fill="#7c7c7c" />
<rect x="269" y="466" width="1" height="1" fill="#7c7c7c" />
<rect x="271" y="466" width="1" height="1" fill="#7c7c7c" />
<path d="M350.5 454H463.0L450.0 480H337.5z" fill="url(#blueh)" shape-rendering="geometricPrecision"/>
<path d="M381.0 456H460.0L449.0 478H370.0z" fill="#000" shape-rendering="geometricPrecision"/>
<text x="354.5" y="474.8" font-size="20" fill="#7c7c7c" >4</text>
<text x="402.0" y="471.5" font-size="12" fill="#7c7c7c" letter-spacing="0.2">10.0mV</text>
<rect x="382" y="462" width="7" height="1" fill="#7c7c7c" />
<rect x="382" y="466" width="1" height="1" fill="#7c7c7c" />
<rect x="384" y="466" width="1" height="1" fill="#7c7c7c" />
<rect x="386" y="466" width="1" height="1" fill="#7c7c7c" />
<rect x="388" y="466" width="1" height="1" fill="#7c7c7c" />
<path d="M800 454.500H713L700 480" fill="none" stroke="#4a4a4a" shape-rendering="geometricPrecision"/>
<g stroke="#ececec" fill="none" stroke-width="1.300" shape-rendering="geometricPrecision"><path d="M742 466.500H758"/><path d="M744.500 466.500c3.500 0 3.500-4.200 7-4.200h1.500"/><path d="M747.500 466.500c3.500 0 3 4 6.500 4h1"/></g>
<g fill="#ececec" shape-rendering="geometricPrecision"><rect x="740" y="464" width="2.800" height="5" rx=".8"/><circle cx="753.3" cy="462.300" r="1.600"/><circle cx="755" cy="470.500" r="1.600"/><path d="M757.300 464.600l3 1.900l-3 1.900z"/></g>
<g stroke="#ececec" fill="none" shape-rendering="geometricPrecision"><path d="M765.800 463.300L772.500 457.800Q775.300 456.800 775.300 459.500V470.500Q775.300 473.200 772.500 472.200L765.800 466.800Q764.800 465 765.800 463.300z" stroke-width="1.400"/><path d="M772 459.500V470.500" stroke-width="1.100"/><path d="M773.300 464V466.500" stroke-width="1"/><path d="M777.300 462.300l3.700-3.300M777.500 465.500h4.800M777.300 468.700l3.700 3.300" stroke-width="1"/></g>
</svg>
</body></html>
